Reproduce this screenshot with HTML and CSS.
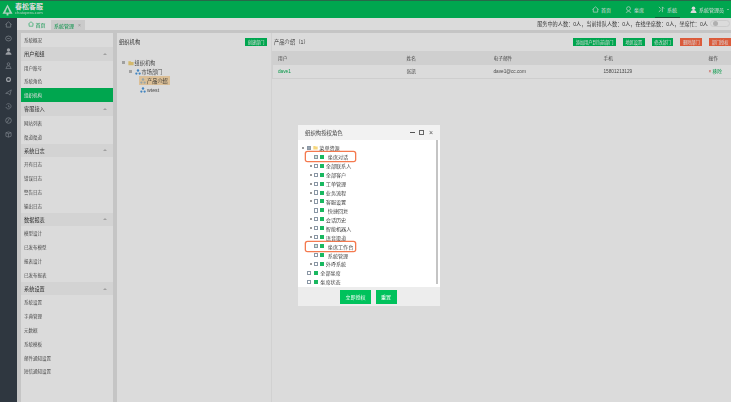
FILE: index.html
```html
<!DOCTYPE html>
<html lang="zh-CN">
<head>
  <meta charset="UTF-8">
  <title>春松客服</title>
  <link rel="stylesheet" href="styles.css">
</head>
<body>

<div class="shell">
  <header class="topbar">
    <div class="logo">
      <svg class="logo-tree" viewBox="0 0 12 12"><path d="M6 0 L11.500 10 H7 V12 H5 V10 H.5 Z M6 3 L3.600 8.800 H8.400 Z" fill="#c9f5dd" fill-rule="evenodd"/></svg>
      <div class="logo-text"><b>春松客服</b><span>chatopera.com</span></div>
    </div>
    <nav class="topnav">
      <a><svg viewBox="0 0 8 8"><path d="M.5 4 L4 1 L7.500 4 M1.500 3.500 V7 H6.500 V3.500" fill="none" stroke="#fff" stroke-width=".7"/></svg>首页</a>
      <a><svg viewBox="0 0 8 8"><circle cx="4" cy="3" r="2.200" fill="none" stroke="#fff" stroke-width=".7"/><path d="M1 7.500 Q4 4.500 7 7.500" fill="none" stroke="#fff" stroke-width=".7"/></svg>坐席</a>
      <a class="on"><svg viewBox="0 0 8 8"><path d="M1 1 L3 3 M1 7 L3.500 4 M5 1 V7 M5 1 L7 3" fill="none" stroke="#fff" stroke-width=".7"/></svg>系统</a>
      <a class="who"><svg viewBox="0 0 8 8"><circle cx="4" cy="2.500" r="2" fill="#fff"/><path d="M.5 8 Q1 4.500 4 4.500 Q7 4.500 7.500 8 Z" fill="#fff"/></svg>系统管理员<i class="caret"></i></a>
    </nav>
  </header>

  <div class="below">
    <aside class="rail">
      <svg viewBox="0 0 8 8"><path d="M.5 4 L4 1 L7.500 4 M1.500 3.500 V7 H6.500 V3.500" fill="none" stroke="#98a0a8" stroke-width=".8"/></svg>
      <svg viewBox="0 0 8 8"><ellipse cx="4" cy="4" rx="3.300" ry="2.800" fill="none" stroke="#98a0a8" stroke-width=".8"/><path d="M2.500 4 H5.500" stroke="#98a0a8" stroke-width=".7"/></svg>
      <svg viewBox="0 0 8 8"><circle cx="4" cy="2.300" r="1.900" fill="#b4b9bf"/><path d="M.6 7.600 Q1 4.500 4 4.500 Q7 4.500 7.400 7.600 Z" fill="#b4b9bf"/></svg>
      <svg viewBox="0 0 8 8"><circle cx="4" cy="2.300" r="1.500" fill="none" stroke="#98a0a8" stroke-width=".7"/><path d="M1 7.500 L2.500 4.500 H5.500 L7 7.500 Z" fill="none" stroke="#98a0a8" stroke-width=".7"/></svg>
      <svg viewBox="0 0 8 8"><circle cx="4" cy="4" r="2.200" fill="none" stroke="#b4b9bf" stroke-width="1.400"/></svg>
      <svg viewBox="0 0 8 8"><path d="M.8 5 L7.200 1 L5.500 7 L3.800 5 Z" fill="none" stroke="#98a0a8" stroke-width=".7"/></svg>
      <svg viewBox="0 0 8 8"><path d="M1.500 2 A3 3 0 1 1 1 4.500 M4 2.500 V4.500 H5.500" fill="none" stroke="#98a0a8" stroke-width=".7"/></svg>
      <svg viewBox="0 0 8 8"><circle cx="4" cy="4" r="3.200" fill="none" stroke="#98a0a8" stroke-width=".8"/><path d="M2.500 6 Q4 4 5 1.500" fill="none" stroke="#98a0a8" stroke-width=".8"/></svg>
      <svg viewBox="0 0 8 8"><path d="M1 2 L4 1 L7 2 V6 L4 7 L1 6 Z M1 2 L4 3 L7 2 M4 3 V7" fill="none" stroke="#98a0a8" stroke-width=".7"/></svg>
    </aside>

    <div class="work">
      <div class="tabs">
        <a class="tab"><svg viewBox="0 0 8 8"><path d="M.5 4 L4 1 L7.500 4 M1.500 3.500 V7 H6.500 V3.500" fill="none" stroke="#00b957" stroke-width=".7"/></svg>首页</a>
        <a class="tab active">系统管理<span class="close">×</span></a>
        <p class="stats">服务中的人数：0人，当前排队人数：0人，在线坐席数：0人，坐席忙：0人<span class="toggle"></span></p>
      </div>

      <div class="panes">
        <ul class="sidemenu">
          <li>系统概况</li>
          <li class="head">用户和组<i class="up"></i></li>
          <li>用户账号</li>
          <li>系统角色</li>
          <li class="current">组织机构</li>
          <li class="head">客服接入<i class="up"></i></li>
          <li>网站列表</li>
          <li>渠道渠道</li>
          <li class="head">系统日志<i class="up"></i></li>
          <li>开有日志</li>
          <li>错误日志</li>
          <li>警告日志</li>
          <li>输出日志</li>
          <li class="head">数据报表<i class="up"></i></li>
          <li>模型设计</li>
          <li>已发布模型</li>
          <li>报表设计</li>
          <li>已发布报表</li>
          <li class="head">系统设置<i class="up"></i></li>
          <li>系统设置</li>
          <li>字典管理</li>
          <li>元数据</li>
          <li>系统模板</li>
          <li>邮件通知设置</li>
          <li>短信通知设置</li>
        </ul>

        <section class="orgpane">
          <div class="panehead">
            <h2>组织机构</h2>
            <a class="btn">创建部门</a>
          </div>
          <div class="orgtree">
            <div class="node"><i class="sw"></i><svg viewBox="0 0 8 8"><path d="M.5 1.500 H3.500 L4.300 2.500 H7.500 V7 H.5 Z" fill="#f6d77e"/></svg>组织机构</div>
            <div class="node l1"><i class="sw"></i><svg viewBox="0 0 8 8"><use href="#org"/></svg>市场部门</div>
            <div class="node l2 sel"><svg viewBox="0 0 8 8"><use href="#org"/></svg>产品介绍</div>
            <div class="node l2"><svg viewBox="0 0 8 8"><use href="#org"/></svg>wtest</div>
          </div>
        </section>

        <section class="userpane">
          <div class="panehead wide">
            <h2>产品介绍（1）</h2>
            <div class="actions">
              <a class="btn">添加用户到当前部门</a>
              <a class="btn">地区设置</a>
              <a class="btn">修改部门</a>
              <a class="btn red">删除部门</a>
              <a class="btn red">部门授权</a>
            </div>
          </div>
          <table>
            <tr><th class="c1">用户</th><th class="c2">姓名</th><th class="c3">电子邮件</th><th class="c4">手机</th><th>操作</th></tr>
            <tr><td class="link">dave1</td><td>张凯</td><td>dave1@cc.com</td><td>15801213129</td><td><span class="del">×</span> <span class="link">移除</span></td></tr>
          </table>
        </section>
      </div>
    </div>
  </div>
</div>

<svg class="defs" width="0" height="0"><symbol id="org" viewBox="0 0 8 8"><circle cx="4" cy="2" r="1.600" fill="#4d9ae0"/><circle cx="1.800" cy="6" r="1.500" fill="#4d9ae0"/><circle cx="6.200" cy="6" r="1.500" fill="#4d9ae0"/></symbol></svg>

<div class="dim"></div>

<div class="dialog">
  <div class="dialog-title">
    <span>组织构授权角色</span>
    <div class="winbtns"><i class="min"></i><i class="max"></i><i class="x">×</i></div>
  </div>
  <div class="dialog-body">
    <div class="row root"><i class="sw"></i><i class="box half"></i><svg viewBox="0 0 8 8"><path d="M.5 1.500 H3.500 L4.300 2.500 H7.500 V7 H.5 Z" fill="#f6d77e"/></svg>菜单资源</div>
    <div class="row sub picked"><i class="box on"></i><i class="leaf"></i><span class="gap">坐席对话</span></div>
    <div class="row sub"><i class="sw"></i><i class="box"></i><i class="leaf"></i>全部联系人</div>
    <div class="row sub"><i class="sw"></i><i class="box"></i><i class="leaf"></i>全部客户</div>
    <div class="row sub"><i class="sw"></i><i class="box"></i><i class="leaf"></i>工单管理</div>
    <div class="row sub"><i class="sw"></i><i class="box"></i><i class="leaf"></i>业务流程</div>
    <div class="row sub"><i class="sw"></i><i class="box"></i><i class="leaf"></i>客服设置</div>
    <div class="row sub nosw"><i class="box"></i><i class="leaf"></i><span class="gap">快捷回复</span></div>
    <div class="row sub"><i class="sw"></i><i class="box"></i><i class="leaf"></i>会话历史</div>
    <div class="row sub"><i class="sw"></i><i class="box"></i><i class="leaf"></i>智能机器人</div>
    <div class="row sub"><i class="sw"></i><i class="box"></i><i class="leaf"></i>语音渠道</div>
    <div class="row sub picked"><i class="box on"></i><i class="leaf"></i><span class="gap">坐席工作台</span></div>
    <div class="row sub nosw"><i class="box"></i><i class="leaf"></i><span class="gap">系统管理</span></div>
    <div class="row sub"><i class="sw"></i><i class="box"></i><i class="leaf"></i>外呼系统</div>
    <div class="row top"><i class="box"></i><i class="leaf"></i>全部坐席</div>
    <div class="row top"><i class="box"></i><i class="leaf"></i>坐席状态</div>
    <div class="scrollbar"></div>
  </div>
  <div class="dialog-foot">
    <a class="btn big">立即授权</a>
    <a class="btn big">重置</a>
  </div>
</div>

</body>
</html>
```

FILE: styles.css
```css
* { box-sizing: border-box; }
html, body { margin: 0; height: 100%; overflow: hidden; }
body {
  font-family: "Liberation Sans", "Noto Sans CJK SC", sans-serif;
  font-size: 5px;
  color: #555;
  background: #fff;
}
i { font-style: normal; }
.defs { position: absolute; }

.shell { display: flex; flex-direction: column; height: 402px; filter: blur(.4px); }

/* top bar */
.topbar {
  height: 18px;
  flex: none;
  display: flex;
  justify-content: space-between;
  background: #00c25c;
  border-top: 1px solid #2f7a55;
  color: #fff;
}
.logo { display: flex; align-items: center; padding-left: 2px; gap: 2px; }
.logo-tree { width: 11px; height: 12px; }
.logo-text { display: flex; flex-direction: column; line-height: 4px; }
.logo-text b { font-family: "Liberation Serif", "Noto Sans CJK SC", serif; font-size: 7px; line-height: 7px; }
.logo-text span { font-size: 4.200px; opacity: .8; }
.topnav { display: flex; padding-right: 2px; font-size: 5px; }
.topnav a { display: flex; align-items: center; gap: 1.500px; padding: 0 3.500px; margin-left: 7.500px; }
.topnav svg { width: 7px; height: 7px; }
.topnav .on { border-bottom: 1px solid #136b3f; }
.topnav .who { margin-left: 10px; padding: 0; }
.caret { border: 1.500px solid transparent; border-top-color: #fff; border-bottom: 0; margin-left: 1.500px; }

/* left rail */
.below { flex: 1; display: flex; min-height: 0; }
.rail {
  width: 17px;
  flex: none;
  background: #37404b;
  display: flex;
  flex-direction: column;
  align-items: center;
  padding-top: 3px;
  gap: 6.700px;
}
.rail svg { width: 7px; height: 7px; flex: none; }

/* tabs */
.work { flex: 1; display: flex; flex-direction: column; background: #e6e6e6; min-width: 0; }
.tabs {
  height: 12px;
  flex: none;
  display: flex;
  align-items: stretch;
  background: #fff;
  padding-left: 6px;
}
.tab { display: flex; align-items: center; gap: 1.500px; padding: 0 5px; font-size: 5px; color: #00a84f; }
.tab svg { width: 6px; height: 6px; }
.tab.active { background: #ececec; margin-top: 2px; padding: 0 4px 0 3.500px; gap: 4px; }
.close { color: #aaa; }
.stats { margin: 0 1px 2px auto; display: flex; align-items: center; font-size: 5.150px; color: #444; }
.toggle { width: 20px; height: 7px; border-radius: 4px; background: #fff; border: 1px solid #eee; margin-left: 2px; position: relative; }
.toggle::after { content: ""; position: absolute; left: 2px; top: 0; width: 5px; height: 5px; border-radius: 50%; background: #ccc; }

/* panes */
.panes { flex: 1; display: flex; margin-top: 3px; min-height: 0; background: #fff; }
.sidemenu {
  list-style: none;
  width: 100px;
  flex: none;
  margin: 0;
  padding: 0;
  background: #fff;
  border-left: 4px solid #e6e6e6;
  border-right: 4px solid #e6e6e6;
}
.sidemenu li {
  height: 13.820px;
  padding: 0 3px;
  display: flex;
  align-items: center;
  justify-content: space-between;
  font-size: 4.500px;
  color: #555;
}
.sidemenu .head { background: #f6f6f6; font-size: 5.200px; color: #333; }
.sidemenu .current { background: #00c25c; color: #fff; }
.up { border: 2px solid transparent; border-bottom-color: #bbb; border-top: 0; margin-right: 3px; }

.panehead { height: 18px; display: flex; align-items: center; justify-content: space-between; padding: 0 3px 0 2px; }
.panehead.wide { padding-right: 0; }
h2 { margin: 0; font-size: 5.300px; font-weight: normal; color: #444; }

.orgpane { width: 155px; flex: none; border-right: 1px solid #f4f4f4; }
.orgtree { padding: 7px 0 0 5px; }
.node { display: flex; align-items: center; gap: 1px; height: 9px; font-size: 5.200px; }
.node svg { width: 6px; height: 6px; }
.node.l1 { padding-left: 7px; }
.node.l2 { margin-left: 17px; padding-left: 1px; }
.node.sel { background: #ffdfb0; width: 31px; color: #333; }
.node.sel svg { opacity: .45; }
.sw { width: 3px; height: 3px; background: #bbb; margin-right: 1.500px; flex: none; }

.userpane { flex: 1; min-width: 0; }
.actions { display: flex; gap: 5px; margin-right: -1px; }
.btn {
  display: inline-flex;
  align-items: center;
  justify-content: center;
  height: 10px;
  padding: 0 2.500px;
  background: #00c25c;
  color: #fff;
  font-size: 4.200px;
  border: 1px solid #fff;
}
.btn.red { background: #ff6a45; }

table { width: 100%; border-collapse: collapse; margin-top: 0; border-left: 1px solid #f2f2f2; }
th, td { text-align: left; height: 13.800px; padding: 0 0 0 5px; font-weight: normal; font-size: 4.700px; }
th { background: #f1f1f1; }
td { border-bottom: 1px solid #f0f0f0; }
.c1 { width: 129px; }
.c2 { width: 87px; }
.c3 { width: 110px; }
.c4 { width: 105px; }
.link { color: #00b050; }
.del { color: #e85a4a; }

/* dialog */
.dim { position: absolute; inset: 0; background: rgba(0, 0, 0, .14); }
.dialog {
  position: absolute;
  left: 298px;
  top: 125px;
  width: 142px;
  height: 181px;
  background: #fff;
  display: flex;
  flex-direction: column;
  filter: blur(.4px);
}
.dialog-title {
  height: 15px;
  flex: none;
  background: #f2f2f2;
  padding: 0 7px;
  display: flex;
  align-items: center;
  justify-content: space-between;
  font-size: 5.400px;
  color: #444;
}
.winbtns { display: flex; align-items: center; gap: 4.500px; }
.min { width: 5px; height: 1px; background: #555; }
.max { width: 5px; height: 5px; border: 1px solid #666; }
.x { font-size: 7px; line-height: 5px; color: #555; }
.dialog-body { flex: 1; position: relative; padding-top: 3.500px; min-height: 0; }
.row {
  height: 8.930px;
  display: flex;
  align-items: center;
  font-size: 5.100px;
  color: #444;
  white-space: nowrap;
}
.row .sw { width: 2px; height: 2px; background: #999; margin-right: 2px; }
.row.root { padding-left: 4px; }
.row.root .box { margin-left: 1px; }
.row.sub { padding-left: 12px; }
.row.nosw { padding-left: 16px; }
.row.top { padding-left: 9px; }
.row.top .box { margin-right: 3px; }
.row.top .leaf { margin-right: 2px; }
.row.picked {
  padding-left: 11px;
  margin-left: 8px;
  width: 49px;
  box-shadow: 0 0 0 1.300px #f47a4f;
  border-radius: 1.500px;
}
.row.picked .box { margin-left: -3px; }
.box { width: 4.300px; height: 4.300px; border: .6px solid #8a97a5; background: #fff; margin-right: 2px; flex: none; }
.box.on { background: #cfe8d6; }
.box.half { background: #9aa5b0; }
.row svg { width: 5px; height: 5px; margin-right: 1px; }
.leaf { width: 4px; height: 4px; background: #19b860; margin-right: 1.500px; flex: none; }
.gap { margin-left: 2px; }
.scrollbar { position: absolute; right: 2px; top: 0; bottom: 3px; width: 2px; background: #c4c4c4; }
.dialog-foot {
  height: 19px;
  flex: none;
  background: #ededed;
  display: flex;
  justify-content: center;
  align-items: center;
  gap: 5px;
  padding-right: 1px;
}
.btn.big { height: 14px; padding: 0 5px; font-size: 5px; min-width: 21px; border: 0; }
```
